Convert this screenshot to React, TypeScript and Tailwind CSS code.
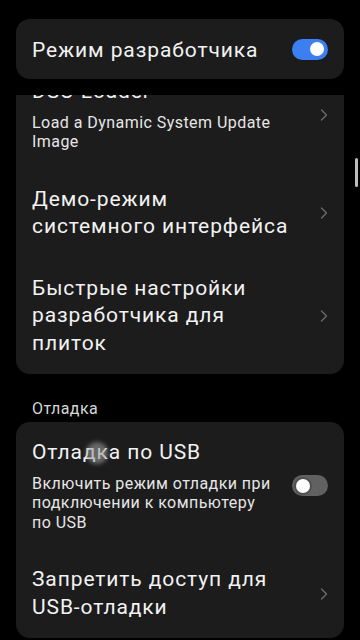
import React from 'react';

function Chevron() {
  return (
    <svg width="8" height="14" viewBox="0 0 8 14" className="shrink-0">
      <path d="M1.5 2 L6.5 7 L1.5 12" fill="none" stroke="#6b6b6b" strokeWidth="1.4" strokeLinecap="round" strokeLinejoin="round" />
    </svg>
  );
}

function Toggle({ on }: { on: boolean }) {
  return on ? (
    <div className="w-[36px] h-[21px] rounded-full bg-[#3b7ff2] flex items-center justify-end pr-[4px] shrink-0">
      <div className="w-[14px] h-[14px] rounded-full bg-white" />
    </div>
  ) : (
    <div className="w-[36px] h-[21px] rounded-full bg-[#616161] flex items-center pl-[4px] shrink-0">
      <div className="w-[14px] h-[14px] rounded-full bg-white ring-[2px] ring-[#505050]" />
    </div>
  );
}

interface RowProps {
  title: string[];
  subtitle?: string[];
  right: React.ReactNode;
}

function Row({ title, subtitle, right }: RowProps) {
  return (
    <div className="flex items-center pl-4 pr-4 py-[17px]">
      <div className="flex-1 min-w-0 whitespace-nowrap">
        <div className="text-[21px] leading-[27.5px] tracking-[0.9px] text-[#f2f2f2]">
          {title.map((t, i) => (
            <div key={i}>{t}</div>
          ))}
        </div>
        {subtitle && (
          <div className="mt-[7px] text-[16px] leading-[19.5px] tracking-[0.45px] text-[#e6e6e6]">
            {subtitle.map((t, i) => (
              <div key={i}>{t}</div>
            ))}
          </div>
        )}
      </div>
      <div className="w-[36px] flex justify-end shrink-0">{right}</div>
    </div>
  );
}

export default function App() {
  return (
    <div
      className="relative w-[360px] h-[640px] bg-black overflow-hidden flex flex-col"
      style={{ fontFamily: 'Roboto, "Noto Sans", sans-serif' }}
    >
      <div className="px-4 pt-[19px]">
        <div className="h-[60px] rounded-[14px] bg-[#1c1c1c] flex items-center justify-between px-4">
          <span className="pt-[4px] text-[21px] tracking-[0.9px] text-[#f2f2f2]">Режим разработчика</span>
          <Toggle on />
        </div>
      </div>

      <div className="mt-[16px] flex-1 overflow-hidden">
        <div className="px-4 -mt-[34px]">
          <div className="rounded-[14px] bg-[#1c1c1c]">
            <Row
              title={['DSU Loader']}
              subtitle={['Load a Dynamic System Update', 'Image']}
              right={<Chevron />}
            />
            <Row title={['Демо-режим', 'системного интерфейса']} right={<Chevron />} />
            <Row title={['Быстрые настройки', 'разработчика для', 'плиток']} right={<Chevron />} />
          </div>

          <div className="px-4 pt-[23px] pb-[1px] text-[16px] leading-[24px] tracking-[0.45px] text-[#d6d6d6]">Отладка</div>

          <div className="rounded-[14px] bg-[#1c1c1c]">
            <Row
              title={['Отладка по USB']}
              subtitle={['Включить режим отладки при', 'подключении к компьютеру', 'по USB']}
              right={<Toggle on={false} />}
            />
            <Row title={['Запретить доступ для', 'USB-отладки']} right={<Chevron />} />
          </div>
        </div>
      </div>

      {/* scrollbar */}
      <div className="absolute left-[355px] top-[158px] w-[3px] h-[29px] rounded-full bg-[#bdbdbd]" />
      {/* touch indicator */}
      <div className="absolute left-[86px] top-[442px] w-[22px] h-[22px] rounded-full bg-[#9a9a9a] opacity-60 blur-[2px]" />
    </div>
  );
}
